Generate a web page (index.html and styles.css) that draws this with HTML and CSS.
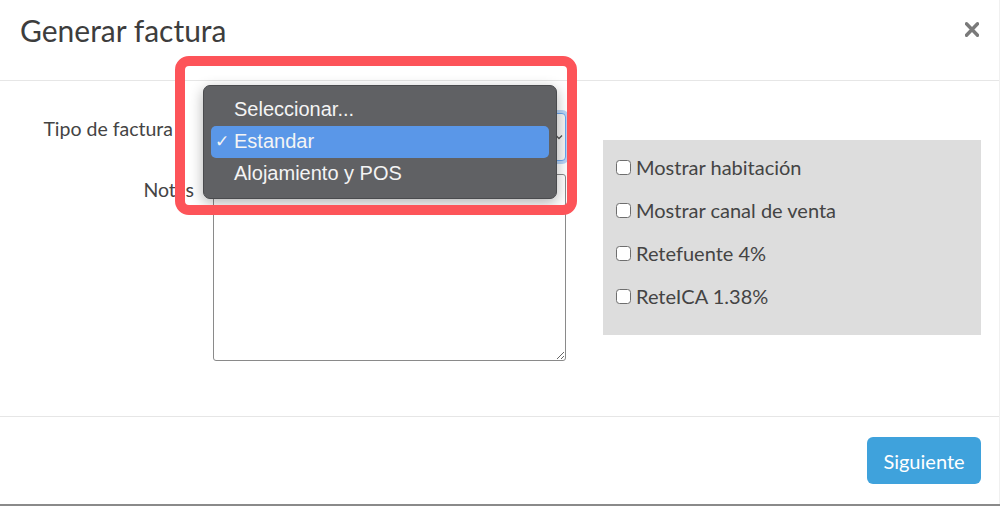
FILE: index.html
```html
<!DOCTYPE html>
<html lang="es">
  <head>
    <meta charset="UTF-8" />
    <title>Generar factura</title>
    <link rel="stylesheet" href="styles.css">
  </head>
  <body>
    <div class="modal">
      <!-- Header -->
      <div class="modal-header">
        <h4 class="modal-title">Generar factura</h4>
        <button class="close" aria-label="Cerrar">
          <svg width="14" height="15" viewBox="0 0 14 15">
            <path d="M1.5 1.8 L12.5 13.2 M12.5 1.8 L1.5 13.2" stroke="#7a7a7a" stroke-width="3.4" stroke-linecap="round" />
          </svg>
        </button>
      </div>

      <!-- Body -->
      <div class="modal-body">
        <div class="form">
          <label class="form-label label-type">Tipo de factura</label>
          <div class="select-field">
            <span class="select-arrow">
              <svg width="8" height="6" viewBox="0 0 8 6"><path d="M1 1.5 L4 4.5 L7 1.5" fill="none" stroke="#555" stroke-width="1.3" /></svg>
            </span>
          </div>
          <label class="form-label">Notas</label>
          <textarea class="notes"></textarea>
        </div>

        <div class="options">
          <label class="option"><input type="checkbox" />Mostrar habitación</label>
          <label class="option"><input type="checkbox" />Mostrar canal de venta</label>
          <label class="option"><input type="checkbox" />Retefuente 4%</label>
          <label class="option"><input type="checkbox" />ReteICA 1.38%</label>
        </div>
      </div>

      <!-- Footer -->
      <div class="modal-footer">
        <button class="btn-primary">Siguiente</button>
      </div>

      <!-- Native popup menu of the select -->
      <ul class="popup-menu">
        <li>Seleccionar...</li>
        <li class="selected"><span class="check">✓</span>Estandar</li>
        <li>Alojamiento y POS</li>
      </ul>

      <!-- Annotation frame -->
      <div class="highlight-frame"></div>
    </div>
  </body>
</html>
```

FILE: styles.css
```css
* {
  box-sizing: border-box;
}
html,
body {
  margin: 0;
  padding: 0;
  height: 100%;
  background-color: #8a8a8a;
  font-family: Lato, "Open Sans", sans-serif;
  color: #444;
  overflow: hidden;
}
.modal {
  position: relative;
  height: 504px;
  background-color: #fff;
  border-right: 1px solid #f0f0f0;
  display: flex;
  flex-direction: column;
}

/* Header */
.modal-header {
  height: 81px;
  border-bottom: 1px solid #e6e6e6;
  padding: 12px 18px 0 20px;
  display: flex;
  justify-content: space-between;
  align-items: flex-start;
}
.modal-title {
  margin: 0;
  font-size: 30px;
  font-weight: normal;
  line-height: 1.2;
  color: #3d3d3d;
}
.close {
  border: none;
  background: none;
  padding: 0;
  margin-top: 10px;
  margin-right: 2px;
  cursor: pointer;
}

/* Body */
.modal-body {
  height: 336px;
  border-bottom: 1px solid #e6e6e6;
  padding: 32px 18px 0 0;
  display: flex;
  align-items: flex-start;
}
.form {
  display: grid;
  grid-template-columns: 194px 353px;
  column-gap: 19px;
  row-gap: 13px;
}
.form-label {
  text-align: right;
  font-size: 19.5px;
  line-height: 1.2;
  padding-top: 4px;
}
.label-type {
  padding-right: 21px;
}
.select-field {
  height: 48px;
  width: 350px;
  border: 1px solid #6aa5ef;
  box-shadow: 0 0 0 3px #b9d5f8;
  border-radius: 4px;
  background-color: #f5f5f5;
  margin-left: 3px;
  display: flex;
  align-items: center;
  justify-content: flex-end;
  padding: 0 2px 0 12px;
}
.select-arrow {
  display: flex;
}
.notes {
  width: 353px;
  height: 187px;
  border: 1px solid #8a8a8a;
  border-radius: 3px;
  margin: 0;
  font-family: inherit;
}
.options {
  margin-top: 27px;
  margin-left: 37px;
  width: 379px;
  background-color: #dddddd;
  padding: 6px 12px 17px;
}
.option {
  display: flex;
  align-items: center;
  height: 43px;
  line-height: 43px;
  font-size: 20px;
  color: #444;
}
.option input {
  appearance: none;
  -webkit-appearance: none;
  width: 15px;
  height: 15px;
  margin: 0 5px 0 1px;
  border: 1px solid #6e6e6e;
  border-radius: 3.5px;
  background-color: #fff;
}

/* Footer */
.modal-footer {
  flex: 1;
  padding: 20px 18px 0 0;
  display: flex;
  justify-content: flex-end;
  align-items: flex-start;
}
.btn-primary {
  width: 114px;
  height: 47px;
  border: none;
  border-radius: 6px;
  background-color: #3fa2dc;
  color: #fff;
  font-family: Lato, sans-serif;
  font-size: 20px;
  cursor: pointer;
}

/* Popup menu overlay */
.popup-menu {
  position: absolute;
  left: 203px;
  top: 85px;
  width: 354px;
  margin: 0;
  padding: 8px 7px;
  list-style: none;
  background-color: #606164;
  border: 1px solid #4a4b4e;
  border-radius: 7px;
  box-shadow: 0 4px 14px rgba(0, 0, 0, 0.3);
  font-family: "Liberation Sans", Arial, sans-serif;
  font-size: 20px;
  color: #f4f4f4;
}
.popup-menu li {
  position: relative;
  height: 32px;
  line-height: 31px;
  padding-left: 23px;
  border-radius: 5px;
}
.popup-menu li.selected {
  background-color: #5a97e8;
}
.check {
  position: absolute;
  left: 4px;
  font-size: 17px;
}

/* Annotation frame */
.highlight-frame {
  position: absolute;
  left: 175px;
  top: 56px;
  width: 402px;
  height: 159px;
  border: 10px solid #fd5459;
  border-radius: 14px;
  pointer-events: none;
}
```
